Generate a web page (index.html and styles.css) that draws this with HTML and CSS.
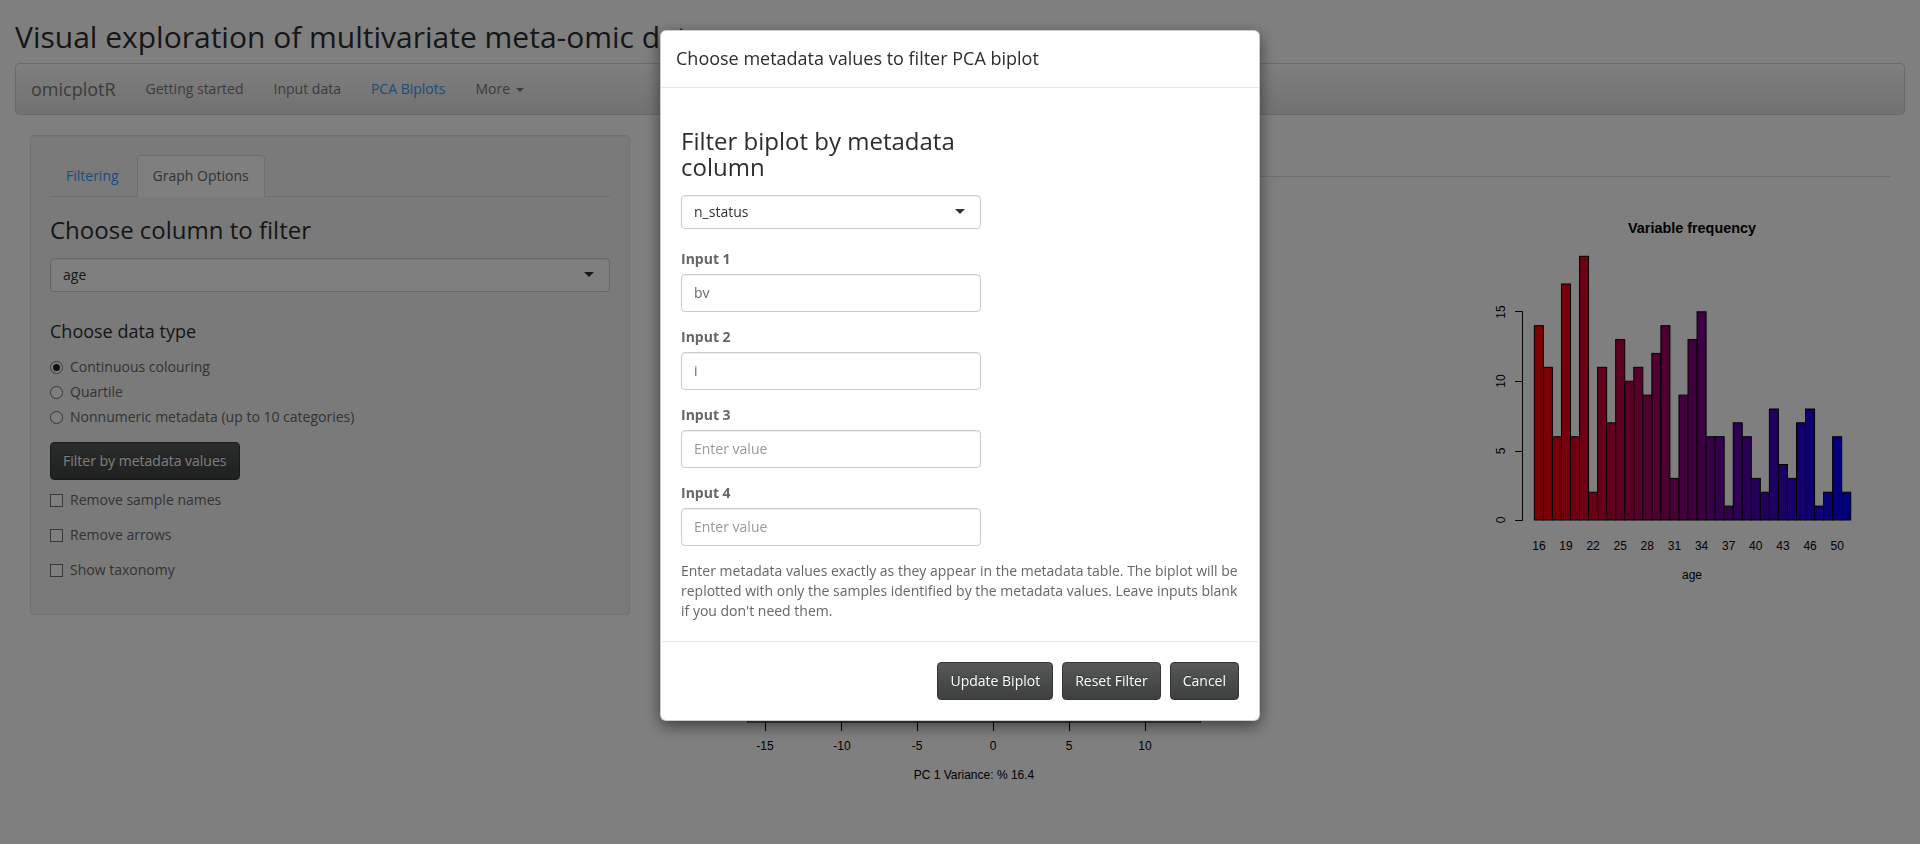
FILE: index.html
```html
<!DOCTYPE html>
<html lang="en">
<head>
<meta charset="utf-8">
<title>omicplotR</title>
<link rel="stylesheet" href="styles.css">
</head>
<body>
<div class="page">
  <h2 class="app-title">Visual exploration of multivariate meta-omic data</h2>
  <nav class="navbar">
    <span class="brand">omicplotR</span>
    <ul class="nav-links">
      <li><a href="#">Getting started</a></li>
      <li><a href="#">Input data</a></li>
      <li class="active"><a href="#">PCA Biplots</a></li>
      <li><a href="#">More <span class="caret"></span></a></li>
    </ul>
  </nav>

  <div class="layout">
    <div class="col">
      <aside class="well">
        <ul class="tabs">
          <li><a href="#">Filtering</a></li>
          <li class="active"><a href="#">Graph Options</a></li>
        </ul>
        <div class="tab-content">
          <div class="form-group select-group">
            <div class="heading-label"><h3>Choose column to filter</h3></div>
            <div class="select">age</div>
          </div>
          <div class="form-group">
            <div class="heading-label"><h4>Choose data type</h4></div>
            <div class="radio"><span class="radio-mark checked"></span>Continuous colouring</div>
            <div class="radio"><span class="radio-mark"></span>Quartile</div>
            <div class="radio"><span class="radio-mark"></span>Nonnumeric metadata (up to 10 categories)</div>
          </div>
          <div class="btn-row"><button class="btn">Filter by metadata values</button></div>
          <div class="form-group"><div class="checkbox"><span class="check-mark"></span>Remove sample names</div></div>
          <div class="form-group"><div class="checkbox"><span class="check-mark"></span>Remove arrows</div></div>
          <div class="form-group"><div class="checkbox"><span class="check-mark"></span>Show taxonomy</div></div>
        </div>
      </aside>
    </div>

    <div class="col">
      <section class="main">
        <div class="tabs main-tabs"></div>
        <div class="plots">
          <svg class="biplot" width="600" height="610" viewBox="660 190 600 610" font-family="Liberation Sans, Arial, sans-serif" font-size="12">
            <rect x="747.5" y="240.5" width="453" height="481.5" fill="none" stroke="#000" stroke-width="1"/>
            <g stroke="#000" stroke-width="1">
              <line x1="765.5" y1="722" x2="765.5" y2="731"/>
              <line x1="841.5" y1="722" x2="841.5" y2="731"/>
              <line x1="917.5" y1="722" x2="917.5" y2="731"/>
              <line x1="993.5" y1="722" x2="993.5" y2="731"/>
              <line x1="1069.5" y1="722" x2="1069.5" y2="731"/>
              <line x1="1145.5" y1="722" x2="1145.5" y2="731"/>
            </g>
            <g text-anchor="middle" fill="#000">
              <text x="765" y="750">-15</text>
              <text x="842" y="750">-10</text>
              <text x="917" y="750">-5</text>
              <text x="993" y="750">0</text>
              <text x="1069" y="750">5</text>
              <text x="1145" y="750">10</text>
              <text x="974" y="779">PC 1 Variance: % 16.4</text>
            </g>
          </svg>

          <svg class="hist" width="450" height="420" viewBox="1440 190 450 420" font-family="Liberation Sans, Arial, sans-serif" font-size="12">
            <text x="1692" y="233" text-anchor="middle" font-weight="bold" font-size="14.4" fill="#000">Variable frequency</text>
            <g stroke="#000" stroke-width="1">
              <line x1="1522.5" y1="311.5" x2="1522.5" y2="520.5"/>
              <line x1="1515" y1="520.5" x2="1522.5" y2="520.5"/>
              <line x1="1515" y1="451.5" x2="1522.5" y2="451.5"/>
              <line x1="1515" y1="381.5" x2="1522.5" y2="381.5"/>
              <line x1="1515" y1="311.5" x2="1522.5" y2="311.5"/>
            </g>
            <g text-anchor="middle" fill="#000">
              <text x="1505" y="520" transform="rotate(-90 1505 520)">0</text>
              <text x="1505" y="451" transform="rotate(-90 1505 451)">5</text>
              <text x="1505" y="381" transform="rotate(-90 1505 381)">10</text>
              <text x="1505" y="312" transform="rotate(-90 1505 312)">15</text>
            </g>
            <g stroke="#000" stroke-width="1">
              <rect x="1534.33" y="325.7" width="9.04" height="194.3" fill="rgb(255,0,0)"/>
              <rect x="1543.37" y="367.3" width="9.04" height="152.7" fill="rgb(248,0,8)"/>
              <rect x="1552.41" y="436.7" width="9.04" height="83.3" fill="rgb(240,0,15)"/>
              <rect x="1561.45" y="284" width="9.04" height="236" fill="rgb(233,0,23)"/>
              <rect x="1570.49" y="436.7" width="9.04" height="83.3" fill="rgb(225,0,30)"/>
              <rect x="1579.53" y="256.3" width="9.04" height="263.7" fill="rgb(218,0,38)"/>
              <rect x="1588.57" y="492.2" width="9.04" height="27.8" fill="rgb(210,0,45)"/>
              <rect x="1597.61" y="367.3" width="9.04" height="152.7" fill="rgb(203,0,53)"/>
              <rect x="1606.65" y="422.8" width="9.04" height="97.2" fill="rgb(195,0,60)"/>
              <rect x="1615.69" y="339.6" width="9.04" height="180.4" fill="rgb(188,0,68)"/>
              <rect x="1624.73" y="381.2" width="9.04" height="138.8" fill="rgb(180,0,75)"/>
              <rect x="1633.77" y="367.3" width="9.04" height="152.7" fill="rgb(173,0,83)"/>
              <rect x="1642.81" y="395.1" width="9.04" height="124.9" fill="rgb(165,0,90)"/>
              <rect x="1651.85" y="353.4" width="9.04" height="166.6" fill="rgb(158,0,98)"/>
              <rect x="1660.89" y="325.7" width="9.04" height="194.3" fill="rgb(150,0,105)"/>
              <rect x="1669.93" y="478.4" width="9.04" height="41.6" fill="rgb(143,0,113)"/>
              <rect x="1678.97" y="395.1" width="9.04" height="124.9" fill="rgb(135,0,120)"/>
              <rect x="1688.01" y="339.6" width="9.04" height="180.4" fill="rgb(128,0,128)"/>
              <rect x="1697.05" y="311.8" width="9.04" height="208.2" fill="rgb(120,0,135)"/>
              <rect x="1706.09" y="436.7" width="9.04" height="83.3" fill="rgb(113,0,143)"/>
              <rect x="1715.13" y="436.7" width="9.04" height="83.3" fill="rgb(105,0,150)"/>
              <rect x="1724.17" y="506.1" width="9.04" height="13.9" fill="rgb(98,0,158)"/>
              <rect x="1733.21" y="422.8" width="9.04" height="97.2" fill="rgb(90,0,165)"/>
              <rect x="1742.25" y="436.7" width="9.04" height="83.3" fill="rgb(83,0,173)"/>
              <rect x="1751.29" y="478.4" width="9.04" height="41.6" fill="rgb(75,0,180)"/>
              <rect x="1760.33" y="492.2" width="9.04" height="27.8" fill="rgb(68,0,188)"/>
              <rect x="1769.37" y="409" width="9.04" height="111" fill="rgb(60,0,195)"/>
              <rect x="1778.41" y="464.5" width="9.04" height="55.5" fill="rgb(53,0,203)"/>
              <rect x="1787.45" y="478.4" width="9.04" height="41.6" fill="rgb(45,0,210)"/>
              <rect x="1796.49" y="422.8" width="9.04" height="97.2" fill="rgb(38,0,218)"/>
              <rect x="1805.53" y="409" width="9.04" height="111" fill="rgb(30,0,225)"/>
              <rect x="1814.57" y="506.1" width="9.04" height="13.9" fill="rgb(23,0,233)"/>
              <rect x="1823.61" y="492.2" width="9.04" height="27.8" fill="rgb(15,0,240)"/>
              <rect x="1832.65" y="436.7" width="9.04" height="83.3" fill="rgb(8,0,248)"/>
              <rect x="1841.69" y="492.2" width="9.04" height="27.8" fill="rgb(0,0,255)"/>
            </g>
            <g text-anchor="middle" fill="#000">
              <text x="1538.9" y="550">16</text>
              <text x="1566" y="550">19</text>
              <text x="1593.1" y="550">22</text>
              <text x="1620.2" y="550">25</text>
              <text x="1647.3" y="550">28</text>
              <text x="1674.5" y="550">31</text>
              <text x="1701.6" y="550">34</text>
              <text x="1728.7" y="550">37</text>
              <text x="1755.8" y="550">40</text>
              <text x="1782.9" y="550">43</text>
              <text x="1810.1" y="550">46</text>
              <text x="1837.2" y="550">50</text>
              <text x="1692" y="579">age</text>
            </g>
          </svg>
        </div>
      </section>
    </div>
  </div>
</div>

<div class="backdrop"></div>

<div class="modal" role="dialog">
  <div class="modal-header">
    <h4 class="modal-title">Choose metadata values to filter PCA biplot</h4>
  </div>
  <div class="modal-body">
    <div class="form-group select-group narrow">
      <div class="heading-label"><h3>Filter biplot by metadata column</h3></div>
      <div class="select">n_status</div>
    </div>
    <div class="form-group narrow">
      <label class="control-label">Input 1</label>
      <div class="text-input">bv</div>
    </div>
    <div class="form-group narrow">
      <label class="control-label">Input 2</label>
      <div class="text-input">i</div>
    </div>
    <div class="form-group narrow">
      <label class="control-label">Input 3</label>
      <div class="text-input placeholder">Enter value</div>
    </div>
    <div class="form-group narrow">
      <label class="control-label">Input 4</label>
      <div class="text-input placeholder">Enter value</div>
    </div>
    <p class="help">Enter metadata values exactly as they appear in the metadata table. The biplot will be replotted with only the samples identified by the metadata values. Leave inputs blank if you don't need them.</p>
  </div>
  <div class="modal-footer">
    <button class="btn">Update Biplot</button>
    <button class="btn">Reset Filter</button>
    <button class="btn">Cancel</button>
  </div>
</div>
</body>
</html>
```

FILE: styles.css
```css
* { box-sizing: border-box; }

html, body {
  margin: 0;
  height: 100%;
}

body {
  font-family: "Open Sans", "Helvetica Neue", Arial, sans-serif;
  font-size: 14px;
  line-height: 1.428571;
  color: #666;
  background: #fff;
  overflow: hidden;
}

.page {
  padding: 0 15px;
}

.app-title {
  margin: 20px 0 10px;
  font-size: 30px;
  line-height: 1.1;
  font-weight: 400;
  color: #2d2d2d;
  white-space: nowrap;
}

/* navbar */
.navbar {
  display: flex;
  height: 52px;
  margin-bottom: 20px;
  border: 1px solid #d5d5d5;
  border-radius: 4px;
  background-image: linear-gradient(#fdfdfd, #eeeeee 60%, #e4e4e4);
}

.brand {
  padding: 15px;
  font-size: 18px;
  line-height: 20px;
  color: #777;
}

.nav-links {
  display: flex;
  list-style: none;
  margin: 0;
  padding: 0;
}

.nav-links a {
  display: block;
  padding: 15px;
  line-height: 20px;
  color: #777;
  text-decoration: none;
}

.nav-links .active a {
  color: #3399f3;
}

.caret {
  display: inline-block;
  width: 0;
  height: 0;
  margin-left: 2px;
  vertical-align: middle;
  border-top: 4px solid;
  border-left: 4px solid transparent;
  border-right: 4px solid transparent;
}

/* layout */
.layout {
  display: grid;
  grid-template-columns: 1fr 2fr;
}

.col {
  padding: 0 15px;
}

.well {
  padding: 19px;
  background: #f5f5f5;
  border: 1px solid #e3e3e3;
  border-radius: 4px;
  box-shadow: inset 0 1px 1px rgba(0, 0, 0, .05);
}

/* tabs */
.tabs {
  display: flex;
  list-style: none;
  margin: 0;
  padding: 0;
  border-bottom: 1px solid #ddd;
}

.main-tabs {
  height: 42px;
}

.tabs li {
  margin-bottom: -1px;
}

.tabs a {
  display: block;
  margin-right: 2px;
  padding: 10px 15px;
  line-height: 20px;
  border: 1px solid transparent;
  border-radius: 4px 4px 0 0;
  color: #3399f3;
  text-decoration: none;
}

.tabs .active a {
  color: #666;
  background: #fff;
  border-color: #ddd #ddd transparent;
}

/* forms */
.form-group {
  margin-bottom: 15px;
}

.form-group.select-group {
  margin-bottom: 20px;
}

.narrow {
  width: 300px;
}

.heading-label {
  display: flow-root;
  margin-bottom: 5px;
}

.heading-label h3 {
  margin: 20px 0 10px;
  font-size: 24px;
  line-height: 1.1;
  font-weight: 400;
  color: #2d2d2d;
}

.heading-label h4 {
  margin: 10px 0;
  font-size: 18px;
  line-height: 1.1;
  font-weight: 400;
  color: #2d2d2d;
}

.control-label {
  display: block;
  margin-bottom: 5px;
  font-weight: 700;
  color: #666;
}

.select {
  position: relative;
  height: 34px;
  padding: 6px 12px;
  line-height: 20px;
  color: #333;
  background: #fff;
  border: 1px solid #ccc;
  border-radius: 4px;
  box-shadow: inset 0 1px 1px rgba(0, 0, 0, .075);
}

.select::after {
  content: "";
  position: absolute;
  right: 15px;
  top: 50%;
  margin-top: -3px;
  border-style: solid;
  border-width: 5px 5px 0;
  border-color: #333 transparent transparent;
}

.text-input {
  height: 38px;
  padding: 8px 12px;
  line-height: 20px;
  color: #666;
  background: #fff;
  border: 1px solid #ccc;
  border-radius: 4px;
  box-shadow: inset 0 1px 1px rgba(0, 0, 0, .075);
}

.text-input.placeholder {
  color: #999;
}

.radio {
  position: relative;
  min-height: 20px;
  line-height: 20px;
  padding-left: 20px;
  margin-bottom: 5px;
}

.radio:last-child {
  margin-bottom: 0;
}

.radio-mark {
  position: absolute;
  left: 0;
  top: 4px;
  width: 13px;
  height: 13px;
  border: 1px solid #707070;
  border-radius: 50%;
  background: #fff;
}

.radio-mark.checked::after {
  content: "";
  position: absolute;
  left: 2px;
  top: 2px;
  width: 7px;
  height: 7px;
  border-radius: 50%;
  background: #222;
}

.checkbox {
  position: relative;
  margin: 10px 0;
  min-height: 20px;
  line-height: 20px;
  padding-left: 20px;
}

.check-mark {
  position: absolute;
  left: 0;
  top: 4px;
  width: 13px;
  height: 13px;
  border: 1px solid #707070;
  background: #fff;
}

.btn-row {
  display: flex;
}

.btn {
  display: inline-block;
  padding: 8px 12px;
  font-family: inherit;
  font-size: 14px;
  line-height: 20px;
  color: #fff;
  text-shadow: 0 -1px 0 rgba(0, 0, 0, .3);
  background-image: linear-gradient(#575959, #474949 60%, #3e4040);
  border: 1px solid #333535;
  border-radius: 4px;
  cursor: pointer;
}

/* main panel */
.plots {
  display: flex;
  justify-content: space-between;
  margin-top: 13px;
}

.plots svg {
  display: block;
  flex: none;
}

/* modal */
.backdrop {
  position: fixed;
  inset: 0;
  background: rgba(0, 0, 0, .5);
  z-index: 1040;
}

.modal {
  position: fixed;
  top: 30px;
  left: 50%;
  width: 600px;
  margin-left: -300px;
  background: #fff;
  border: 1px solid rgba(0, 0, 0, .2);
  border-radius: 6px;
  box-shadow: 0 5px 15px rgba(0, 0, 0, .5);
  z-index: 1050;
}

.modal-header {
  padding: 15px;
  border-bottom: 1px solid #e5e5e5;
}

.modal-title {
  margin: 0;
  font-size: 18px;
  line-height: 1.428571;
  font-weight: 400;
  color: #2d2d2d;
}

.modal-body {
  padding: 20px;
}

.help {
  margin: 0;
  color: #666;
}

.modal-footer {
  display: flex;
  justify-content: flex-end;
  gap: 9px;
  padding: 20px;
  border-top: 1px solid #e5e5e5;
}
```
